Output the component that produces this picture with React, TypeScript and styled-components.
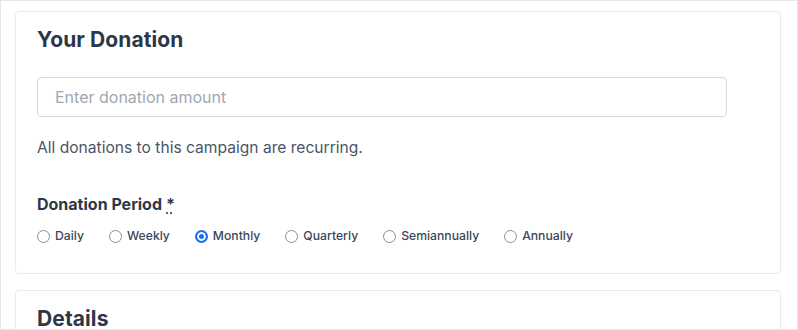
import React, { useState } from 'react'
import styled, { createGlobalStyle } from 'styled-components'

const GlobalStyle = createGlobalStyle`
  html, body {
    margin: 0;
    padding: 0;
    background: #ffffff;
  }
  body {
    font-family: Inter, 'Noto Sans', 'Liberation Sans', sans-serif;
    -webkit-font-smoothing: antialiased;
  }
`

const Frame = styled.div`
  box-sizing: border-box;
  width: 798px;
  height: 330px;
  overflow: hidden;
  border: 1px solid #e6e6e6;
  padding: 10px 16px 0 14px;
  display: flex;
  flex-direction: column;
  gap: 16px;
`

const Card = styled.section`
  box-sizing: border-box;
  flex-shrink: 0;
  border: 1px solid #ebebeb;
  border-radius: 4px;
  background: #ffffff;
  padding: 16px 21px 28px;
`

const CardTitle = styled.h2`
  margin: 0;
  font-size: 21px;
  line-height: 24px;
  font-weight: 700;
  color: #2d3748;
  letter-spacing: 0.1px;
`

const AmountInput = styled.input`
  box-sizing: border-box;
  display: block;
  width: 690px;
  height: 40px;
  margin-top: 25px;
  padding: 0 17px;
  border: 1px solid #d9d9d9;
  border-radius: 4px;
  font-family: inherit;
  font-size: 16px;
  color: #2d3748;
  outline: none;

  &::placeholder {
    color: #a0a7b2;
  }
`

const Note = styled.p`
  margin: 19px 0 0;
  font-size: 15.6px;
  line-height: 24px;
  color: #4a5568;
`

const FieldLabel = styled.div`
  margin-top: 33px;
  font-size: 16px;
  line-height: 22px;
  font-weight: 700;
  color: #2d3748;
`

const Required = styled.abbr`
  margin-left: 4px;
  text-decoration: underline dotted;
  text-underline-offset: 3px;
  cursor: help;
`

const RadioRow = styled.div`
  display: flex;
  align-items: center;
  gap: 25px;
  margin-top: 12px;
`

const RadioOption = styled.label`
  display: flex;
  align-items: center;
  gap: 5px;
  font-size: 12.2px;
  line-height: 18px;
  font-weight: 500;
  color: #3c4657;
  cursor: pointer;
`

const RadioDot = styled.input`
  appearance: none;
  box-sizing: border-box;
  width: 13px;
  height: 13px;
  margin: 0;
  border: 1px solid #8d8d8d;
  border-radius: 50%;
  background: #ffffff;
  cursor: pointer;

  &:checked {
    border: 2px solid #1b6ef3;
    background: #1b6ef3;
    box-shadow: inset 0 0 0 2px #ffffff;
  }
`

const periods = ['Daily', 'Weekly', 'Monthly', 'Quarterly', 'Semiannually', 'Annually']

export default function App() {
  const [period, setPeriod] = useState('Monthly')

  return (
    <>
      <GlobalStyle />
      <Frame>
        <Card>
          <CardTitle>Your Donation</CardTitle>
          <AmountInput type="text" placeholder="Enter donation amount" />
          <Note>All donations to this campaign are recurring.</Note>
          <FieldLabel>
            Donation Period<Required title="required">*</Required>
          </FieldLabel>
          <RadioRow>
            {periods.map((p) => (
              <RadioOption key={p}>
                <RadioDot
                  type="radio"
                  name="period"
                  checked={period === p}
                  onChange={() => setPeriod(p)}
                />
                {p}
              </RadioOption>
            ))}
          </RadioRow>
        </Card>
        <Card>
          <CardTitle>Details</CardTitle>
        </Card>
      </Frame>
    </>
  )
}
